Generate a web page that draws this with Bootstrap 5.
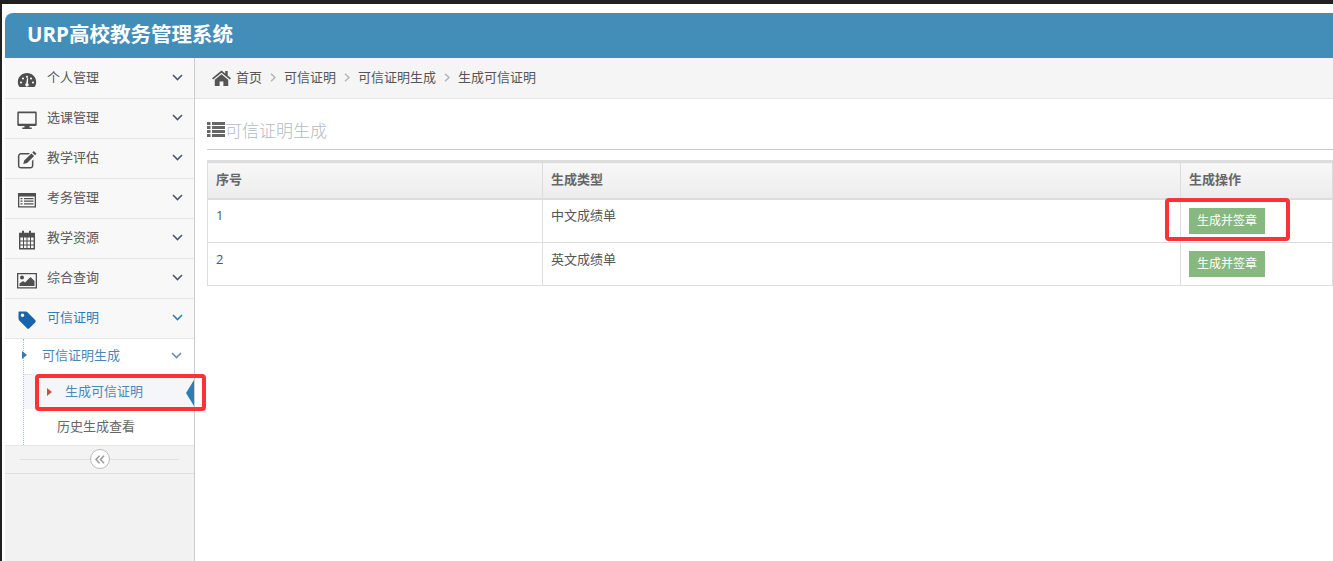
<!DOCTYPE html>
<html lang="zh">
<head>
<meta charset="utf-8">
<title>URP高校教务管理系统</title>
<link rel="stylesheet" href="https://cdn.jsdelivr.net/npm/bootstrap@5.3.0/dist/css/bootstrap.min.css">
<style>
html,body{height:561px;overflow:hidden}
body{background:#202020;font-family:"Open Sans","Noto Sans CJK SC",sans-serif;font-size:13px;color:#555;position:relative;line-height:1.5}
.shell{position:absolute;inset:4px 0 0 2px;background:#fff;padding:9px 0 0 3px;overflow:hidden;display:flex;flex-direction:column}
.topbar{height:45px;flex:none;background:#438eb9;border-radius:8px 0 0 0;color:#fff;font-size:20.5px;font-weight:700;padding-left:22px;line-height:43px}
.workspace{flex:1;display:flex;min-height:0}
.side{width:190px;flex:none;background:#f2f2f2;border-right:1px solid #ccc}
.side-item{height:40px;background:#f8f8f8;border-bottom:1px solid #e5e5e5;display:flex;align-items:center;padding:0 11px 1px 12px;color:#585858}
.side-item:first-child{height:41px;padding-top:1px}
.side-item svg.ic{width:20px;height:20px;flex:none;margin-right:10px;fill:#4f4f4f;margin-top:3px}
.side-item .lbl{flex:1}
.chev{width:11px;height:7px;flex:none;fill:none;stroke:#4a5a6a;stroke-width:1.6;margin-top:-1px}
.side-item.on{color:#2b7dbc}
.side-item.on svg.ic{fill:#1963aa}
.side-item.on .chev{stroke:#2b7dbc}
.sub{background:#fff;border-bottom:1px solid #e5e5e5;position:relative;height:107px}
.sub::before{content:"";position:absolute;left:18px;top:0;bottom:0;border-left:1px dotted #9dbdd6}
.sub-a{height:35px;display:flex;align-items:center;padding:0 12px 2px 37px;color:#4b88b7;position:relative}
.sub-a .chev{margin-left:auto;stroke:#6b8ba8}
.tri-a{position:absolute;left:17px;top:12px;width:0;height:0;border-left:5px solid #3a78ae;border-top:4px solid transparent;border-bottom:4px solid transparent}
.sub-b{height:35px;margin-left:19px;display:flex;align-items:center;padding-left:41px;color:#4b88b7;background:#f4f6f9;position:relative;border-top:1px dotted #ddd}
.tri-b{position:absolute;left:23px;top:13px;width:0;height:0;border-left:5px solid #c8543c;border-top:4px solid transparent;border-bottom:4px solid transparent}
.notch{position:absolute;right:0;top:5px;width:0;height:0;border-right:8px solid #2b7dbc;border-top:13px solid transparent;border-bottom:13px solid transparent}
.sub-c{height:35px;display:flex;align-items:center;padding-left:52px;color:#666}
.collapse-bar{height:28px;border-bottom:1px solid #e0e0e0;position:relative;background:#f3f3f3}
.collapse-bar::before{content:"";position:absolute;left:15px;right:15px;top:13px;border-top:1px solid #e0e0e0}
.circ{position:absolute;left:85px;top:3px;width:20px;height:20px;border-radius:50%;background:#fff;border:1px solid #bbb;display:flex;align-items:center;justify-content:center}
.circ svg{width:10px;height:9px;fill:none;stroke:#999;stroke-width:1.5}
.main{flex:1;min-width:0;background:#fff}
.crumbs{height:41px;background:#f5f5f5;border-bottom:1px solid #e5e5e5;display:flex;align-items:center;padding:0 0 1px 17px}
.crumbs .breadcrumb{margin:0;--bs-breadcrumb-margin-bottom:0;font-size:13px;align-items:center}
.crumbs .breadcrumb-item{padding:0;color:#555;display:flex;align-items:center}
.crumbs .breadcrumb-item+.breadcrumb-item{padding-left:0}
.crumbs .breadcrumb-item+.breadcrumb-item::before{display:none}
.crumb-sep{width:6px;height:9px;fill:none;stroke:#b5b5b5;stroke-width:1.5;margin:0 8px}
.home{width:19px;height:16px;fill:#555;margin-right:5px}
.page-zone{padding:0 0 0 12px}
.page-head{height:51px;border-bottom:1px solid #ccc;display:flex;align-items:flex-end;font-size:17px;font-weight:300;color:#b3bac2;padding-bottom:5px;line-height:26px}
.page-head svg{width:18px;height:15px;fill:#666;margin-bottom:7px}
.grid-tbl{margin:10px 0 0;width:1126px;font-size:13px;border-collapse:collapse;table-layout:fixed;--bs-table-color:#555;color:#555}
.grid-tbl>*>*>*{border:1px solid #ddd;vertical-align:top;line-height:18px;box-shadow:none}
.grid-tbl thead th{background:linear-gradient(#f8f8f8,#ececec);color:#666;font-weight:700;border-top:3px solid #ddd;border-bottom:2px solid #ddd;height:37px;padding:7px 8px 0}
.grid-tbl tbody td{height:43px;padding:7px 8px 0}
.grid-tbl tbody tr:first-child td{height:44px;padding-top:6px}
.grid-tbl tbody tr td.op{padding-top:8px}
.gbtn{background:#87b87f;color:#fff;border:0;border-radius:0;font-size:12px;padding:0;width:76px;height:26px;display:block;line-height:24px;text-align:center}
.gbtn:hover{background:#87b87f;color:#fff}
.mark-box{position:absolute;border:4px solid #fb3237;border-radius:4px;pointer-events:none}
.mb1{left:35px;top:374px;width:171px;height:37px}
.mb2{left:1165px;top:198px;width:125px;height:43px}
</style>
</head>
<body>
<div class="shell">
  <div class="topbar">URP高校教务管理系统</div>
  <div class="workspace">
    <aside class="side">
      <div class="side-item"><svg class="ic" viewBox="0 0 20 20"><path fill-rule="evenodd" d="M10 3C4.800 3 .8 7.100.8 12c0 1.600.4 3.200 1.200 4.500.2.300.5.500.9.500h14.200c.4 0 .7-.2.900-.5.800-1.300 1.200-2.900 1.200-4.500C19.200 7.100 15.200 3 10 3zM4 11.400a1.100 1.100 0 1 0 0 2.200 1.100 1.100 0 0 0 0-2.200zm2-4a1.100 1.100 0 1 0 0 2.200 1.100 1.100 0 0 0 0-2.200zm4-1.700a1.100 1.100 0 1 0 0 2.200 1.100 1.100 0 0 0 0-2.200zm4 1.700a1.100 1.100 0 1 0 0 2.200 1.100 1.100 0 0 0 0-2.200zm2 4a1.100 1.100 0 1 0 0 2.200 1.100 1.100 0 0 0 0-2.200zM8.200 14.800c0 1 .8 1.800 1.800 1.800s1.800-.8 1.800-1.800c0-.7-.4-1.300-.9-1.600l.3-5h-1.200l-.8 5.100c-.6.300-1 .8-1 1.500z"/></svg><span class="lbl">个人管理</span><svg class="chev" viewBox="0 0 11 7"><path d="M1 1l4.500 4.500L10 1"/></svg></div>
      <div class="side-item"><svg class="ic" viewBox="0 0 20 20"><path fill-rule="evenodd" d="M1.500 1.500h17c.7 0 1.200.5 1.200 1.200v12.100c0 .7-.5 1.200-1.200 1.200h-6v1.500h2.200V19H5.300v-1.500h2.200V16h-6c-.7 0-1.200-.5-1.200-1.200V2.700c0-.7.500-1.200 1.200-1.200zm.3 1.700v10.600h16.400V3.200z"/></svg><span class="lbl">选课管理</span><svg class="chev" viewBox="0 0 11 7"><path d="M1 1l4.500 4.500L10 1"/></svg></div>
      <div class="side-item"><svg class="ic" viewBox="0 0 20 20"><path fill-rule="evenodd" d="M4 3h9l-1.500 1.500H4c-.9 0-1.600.7-1.600 1.600v9.300c0 .9.700 1.600 1.600 1.600h9.300c.9 0 1.600-.7 1.600-1.600V11l1.500-1.500v6c0 1.800-1.400 3.100-3.100 3.100H4c-1.800 0-3.100-1.400-3.100-3.100V6.100C.9 4.400 2.300 3 4 3zM16.800 1l2.700 2.700-1.500 1.500-2.700-2.700zm-2.400 2.400l2.700 2.700-7 7-3.900 1 1-3.700z"/></svg><span class="lbl">教学评估</span><svg class="chev" viewBox="0 0 11 7"><path d="M1 1l4.500 4.500L10 1"/></svg></div>
      <div class="side-item"><svg class="ic" viewBox="0 0 20 20"><path fill-rule="evenodd" d="M1 3h18v14.500H1zm1.300 3.400v9.800h15.400V6.400zM3.500 8h2v1.200h-2zm3.500 0h9.500v1.200H7zm-3.500 2.600h2v1.200h-2zm3.500 0h9.500v1.200H7zm-3.500 2.600h2v1.200h-2zm3.500 0h9.500v1.200H7z"/></svg><span class="lbl">考务管理</span><svg class="chev" viewBox="0 0 11 7"><path d="M1 1l4.500 4.500L10 1"/></svg></div>
      <div class="side-item"><svg class="ic" viewBox="0 0 20 20"><path fill-rule="evenodd" d="M5 .8h2v2h5v-2h2v2h4v16.600H2V2.800h3zM3.400 7.500v3h2.600v-3zm3.600 0v3h2.500v-3zm3.500 0v3H13v-3zm3.500 0v3h2.600v-3zM3.400 11.500v3h2.600v-3zm3.600 0v3h2.500v-3zm3.500 0v3H13v-3zm3.500 0v3h2.600v-3zM3.400 15.500V18h2.600v-2.500zm3.600 0V18h2.500v-2.500zm3.500 0V18H13v-2.500zm3.500 0V18h2.600v-2.500z"/></svg><span class="lbl">教学资源</span><svg class="chev" viewBox="0 0 11 7"><path d="M1 1l4.500 4.500L10 1"/></svg></div>
      <div class="side-item"><svg class="ic" viewBox="0 0 20 20"><path fill-rule="evenodd" d="M0 3h20v15.500H0zm1.300 1.300v12.900h17.400V4.300zM5 5.500a2 2 0 1 1 0 4 2 2 0 0 1 0-4zM2.500 16v-2.500L6 11l2 1.500L13.500 7l4 4v5z"/></svg><span class="lbl">综合查询</span><svg class="chev" viewBox="0 0 11 7"><path d="M1 1l4.500 4.500L10 1"/></svg></div>
      <div class="side-item on"><svg class="ic" viewBox="0 0 20 20"><path fill-rule="evenodd" d="M2 1.500h7c.5 0 .9.200 1.200.5l8 8c.7.700.7 1.700 0 2.400l-5.800 5.800c-.7.700-1.700.7-2.400 0l-8-8C1.700 9.500 1.500 9 1.500 8.500V2c0-.3.200-.5.500-.5zM5.500 3.500a1.800 1.800 0 1 0 0 3.600 1.800 1.800 0 0 0 0-3.600z"/></svg><span class="lbl">可信证明</span><svg class="chev" viewBox="0 0 11 7"><path d="M1 1l4.500 4.500L10 1"/></svg></div>
      <div class="sub">
        <div class="sub-a"><span class="tri-a"></span><span>可信证明生成</span><svg class="chev" viewBox="0 0 11 7"><path d="M1 1l4.500 4.500L10 1"/></svg></div>
        <div class="sub-b"><span class="tri-b"></span><span>生成可信证明</span><span class="notch"></span></div>
        <div class="sub-c">历史生成查看</div>
      </div>
      <div class="collapse-bar"><span class="circ"><svg viewBox="0 0 10 9"><path d="M4.500 .8L1 4.500l3.500 3.700M9 .8L5.500 4.500 9 8.200"/></svg></span></div>
    </aside>
    <main class="main">
      <nav class="crumbs" aria-label="breadcrumb">
        <svg class="home" viewBox="0 0 19 16"><path d="M9.500 .5L0 8.300l1.100 1.300L9.500 2.700l8.400 6.900L19 8.300l-3.300-2.700V1h-2.500v2.500zM2.800 9.700V16h4.800v-4.400h3.800V16h4.800V9.700L9.500 4.200z"/></svg>
        <ol class="breadcrumb">
          <li class="breadcrumb-item">首页<svg class="crumb-sep" viewBox="0 0 6 9"><path d="M1 .7l4 3.800-4 3.800"/></svg></li>
          <li class="breadcrumb-item">可信证明<svg class="crumb-sep" viewBox="0 0 6 9"><path d="M1 .7l4 3.800-4 3.800"/></svg></li>
          <li class="breadcrumb-item">可信证明生成<svg class="crumb-sep" viewBox="0 0 6 9"><path d="M1 .7l4 3.800-4 3.800"/></svg></li>
          <li class="breadcrumb-item active">生成可信证明</li>
        </ol>
      </nav>
      <div class="page-zone">
        <div class="page-head"><svg viewBox="0 0 18 15"><path d="M0 0h3.500v3H0zm5 0h13v3H5zM0 4h3.500v3H0zm5 0h13v3H5zM0 8h3.500v3H0zm5 0h13v3H5zM0 12h3.500v3H0zm5 0h13v3H5z"/></svg><span>可信证明生成</span></div>
        <table class="table grid-tbl">
          <colgroup><col style="width:335px"><col style="width:638px"><col></colgroup>
          <thead><tr><th>序号</th><th>生成类型</th><th>生成操作</th></tr></thead>
          <tbody>
            <tr><td>1</td><td>中文成绩单</td><td class="op"><button type="button" class="btn gbtn">生成并签章</button></td></tr>
            <tr><td>2</td><td>英文成绩单</td><td class="op"><button type="button" class="btn gbtn">生成并签章</button></td></tr>
          </tbody>
        </table>
      </div>
    </main>
  </div>
</div>
<div class="mark-box mb1"></div>
<div class="mark-box mb2"></div>
<script src="https://cdn.jsdelivr.net/npm/bootstrap@5.3.0/dist/js/bootstrap.bundle.min.js"></script>
</body>
</html>
